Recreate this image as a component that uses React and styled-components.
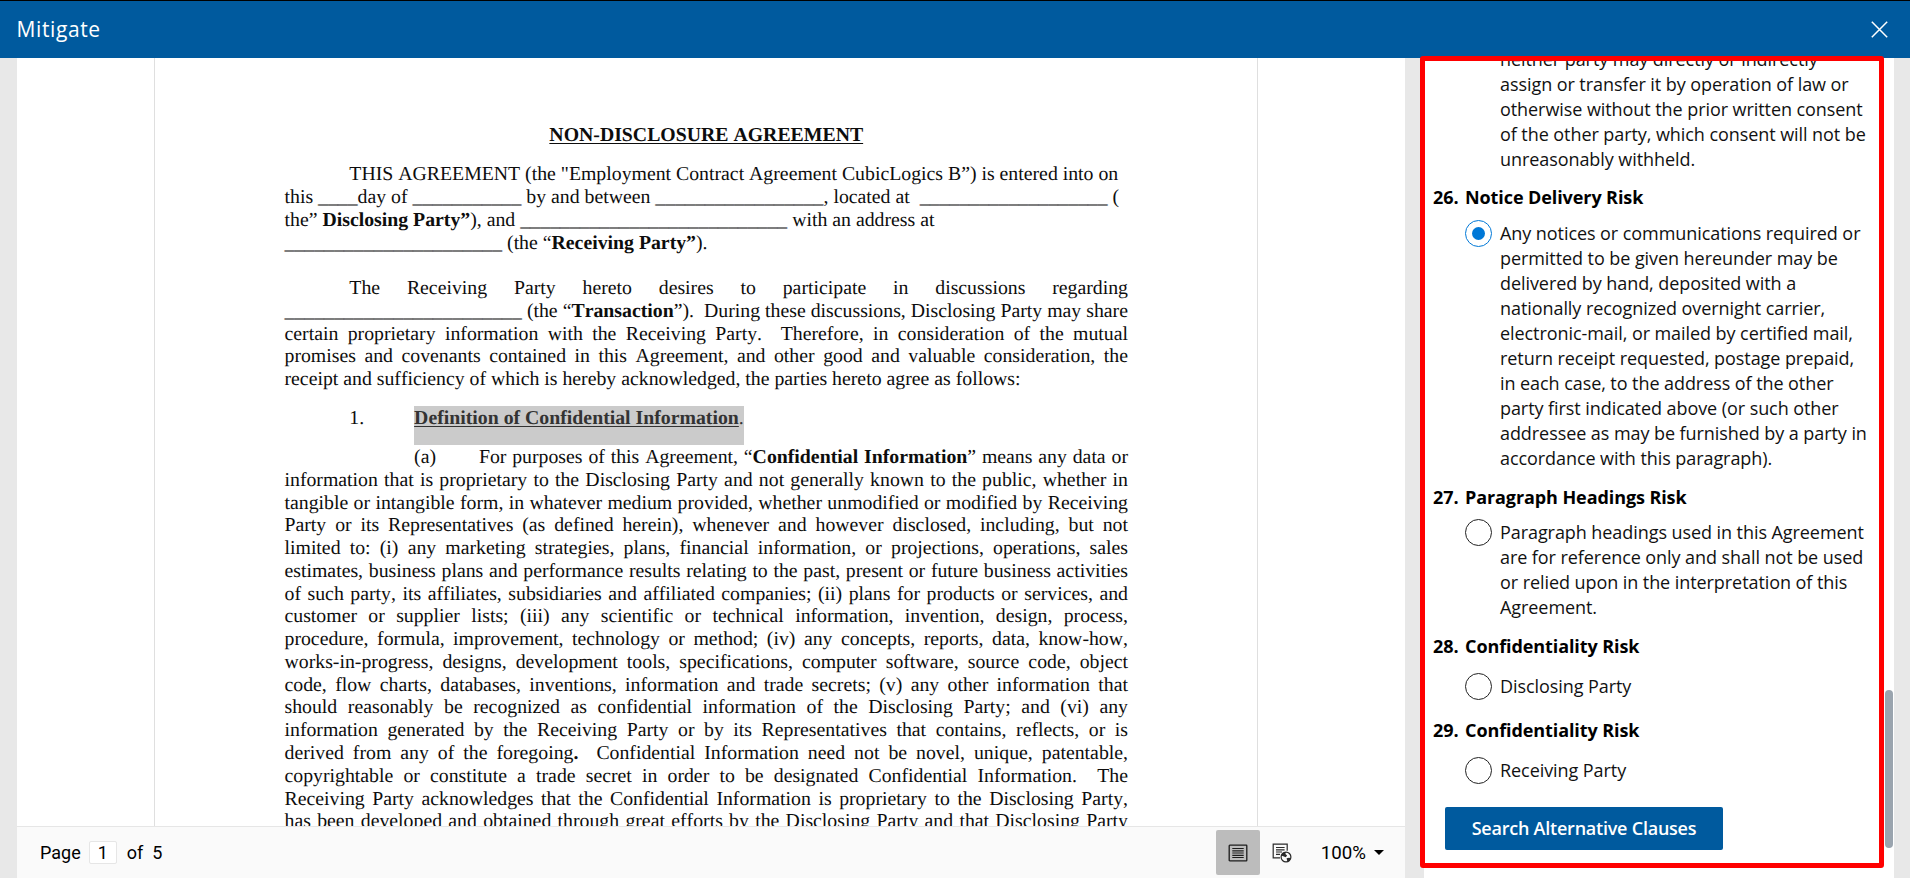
import React from "react";
import styled, { createGlobalStyle } from "styled-components";

const Global = createGlobalStyle`
  * { box-sizing: border-box; }
  body { margin: 0; background: #e8e8e8; overflow: hidden; }
`;

const UI = `"Open Sans", "Noto Sans", sans-serif`;

const Window = styled.div`
  position: relative;
  display: flex;
  flex-direction: column;
  width: 1910px;
  height: 878px;
  overflow: hidden;
  background: #e8e8e8;
  font-family: ${UI};
`;
const Header = styled.header`
  display: flex;
  align-items: center;
  justify-content: space-between;
  flex: none;
  height: 58px;
  padding: 0 22px 0 16.5px;
  border-top: 1px solid #000;
  background: #005a9e;
  color: #fff;
`;
const Title = styled.h1`
  margin: 0 0 2px;
  font-size: 21px;
  line-height: 28px;
  font-weight: 400;
  letter-spacing: 0.6px;
`;
const CloseButton = styled.button`
  display: flex;
  padding: 0;
  border: 0;
  background: none;
  color: #fff;
`;
const Body = styled.main`
  display: flex;
  flex: 1;
  min-height: 0;
  padding: 0 16px 0 17px;
  gap: 19px;
`;

const Viewer = styled.section`
  display: flex;
  flex-direction: column;
  width: 1388px;
  background: #fff;
`;
const Canvas = styled.div`
  flex: 1;
  min-height: 0;
  overflow: hidden;
  padding-left: 137px;
`;
const Sheet = styled.article`
  width: 1104px;
  height: 1400px;
  padding: 66px 129px 0 129.5px;
  border: solid #dfdfdf;
  border-width: 0 1px;
  color: #0d0d0d;
  font-family: "Liberation Serif", "Times New Roman", serif;
  font-size: 19.8px;
  line-height: 22.77px;
  font-kerning: none;
  text-rendering: geometricPrecision;
`;
const DocTitle = styled.h2`
  margin: 0 0 16.5px;
  font-size: inherit;
  font-weight: 700;
  text-align: center;
  text-decoration: underline;
  text-underline-offset: 2px;
`;
const Paragraph = styled.div`
  margin-bottom: ${(p) => p.$gap ?? 16.2}px;
`;
const Line = styled.div`
  padding-left: ${(p) => p.$indent ?? 0}px;
  white-space: ${(p) => (p.$justify ? "normal" : "pre")};
  text-align-last: ${(p) => (p.$justify ? "justify" : "left")};
  word-spacing: ${(p) => (p.$justify ? "-0.6px" : "normal")};
`;
const Clause = styled.div`
  display: flex;
  padding-left: 64.8px;
  margin-bottom: 16.2px;
`;
const ClauseNo = styled.span`
  width: 64.8px;
`;
const Selected = styled.span`
  height: 39px;
  margin: -1.5px 0 -14.75px;
  padding-top: 1.5px;
  background: #cbcbcb;
  color: #333;
  white-space: pre;
  b { text-decoration: underline; text-underline-offset: 2px; }
`;
const SubNo = styled.span`
  display: inline-block;
  width: 64.8px;
  text-align-last: left;
`;

const StatusBar = styled.footer`
  display: flex;
  align-items: center;
  flex: none;
  height: 52px;
  padding: 0 21px 0 23px;
  border-top: 1px solid #e6e6e6;
  background: #fafafa;
  color: #000;
  font-family: Roboto, sans-serif;
  font-size: 18px;
`;
const PageBox = styled.span`
  width: 28px;
  height: 23px;
  margin: 0 10px 0 8px;
  border: 1px solid #e6e6e6;
  border-radius: 2px;
  background: #fff;
  line-height: 21px;
  text-align: center;
`;
const Total = styled.span`
  margin-left: 9px;
`;
const ViewButton = styled.button`
  display: flex;
  align-items: center;
  justify-content: center;
  width: 44px;
  height: 45px;
  margin-left: ${(p) => (p.$first ? "auto" : "0")};
  padding: 0;
  border: 0;
  border-radius: 2px;
  background: ${(p) => (p.$active ? "#bcbcbc" : "transparent")};
`;
const Zoom = styled.div`
  display: flex;
  align-items: center;
  gap: 8px;
  margin-left: 17px;
  font-size: 18.7px;
`;
const Caret = styled.span`
  border: solid transparent;
  border-width: 5.5px 5px 0;
  border-top-color: #000;
`;

const SidePanel = styled.aside`
  display: flex;
  width: 470px;
  background: #fff;
  overflow: hidden;
`;
const RiskList = styled.div`
  flex: 1;
  margin-top: -12px;
  padding-left: 9px;
  font-size: 18px;
  line-height: 25px;
  letter-spacing: -0.07px;
  color: #111;
`;
const Risk = styled.section`
  margin-bottom: ${(p) => p.$after}px;
`;
const RiskTitle = styled.h3`
  display: flex;
  margin: 0 0 ${(p) => p.$gap}px;
  font-size: 18px;
  line-height: 25px;
  font-weight: 700;
  letter-spacing: -0.09px;
  color: #000;
`;
const RiskNo = styled.span`
  width: 32px;
`;
const Option = styled.label`
  display: flex;
  gap: 8px;
  padding-left: 32px;
  min-height: 27px;
`;
const Radio = styled.span`
  display: flex;
  align-items: center;
  justify-content: center;
  flex: none;
  width: 27px;
  height: 27px;
  border: 1px solid ${(p) => (p.$on ? "#0078d7" : "#222")};
  border-radius: 50%;
  visibility: ${(p) => (p.$hidden ? "hidden" : "visible")};
  &::after {
    content: "";
    width: 13px;
    height: 13px;
    border-radius: 50%;
    background: ${(p) => (p.$on ? "#0078d7" : "transparent")};
  }
`;
const OptionText = styled.span`
  white-space: pre;
  padding-top: 1px;
`;
const SearchButton = styled.button`
  display: block;
  width: 278px;
  height: 43px;
  margin-left: 12px;
  padding: 0 0 2px;
  border: 0;
  border-radius: 2px;
  background: #005a9e;
  color: #fff;
  font-family: ${UI};
  font-size: 18px;
  font-weight: 600;
  letter-spacing: -0.23px;
`;
const Rail = styled.div`
  width: 9px;
  padding: 632px 1px 0 0;
`;
const Thumb = styled.div`
  height: 158px;
  border-radius: 4px;
  background: #9aa4ae;
`;
const Highlight = styled.div`
  position: absolute;
  left: 1420px;
  top: 56px;
  width: 464px;
  height: 812px;
  border: 5px solid #f00;
  border-radius: 3px;
  pointer-events: none;
`;

const u = (n) => "_".repeat(n);

const DEFINITION = [
  "information that is proprietary to the Disclosing Party and not generally known to the public, whether in",
  "tangible or intangible form, in whatever medium provided, whether unmodified or modified by Receiving",
  "Party or its Representatives (as defined herein), whenever and however disclosed, including, but not",
  "limited to: (i) any marketing strategies, plans, financial information, or projections, operations, sales",
  "estimates, business plans and performance results relating to the past, present or future business activities",
  "of such party, its affiliates, subsidiaries and affiliated companies; (ii) plans for products or services, and",
  "customer or supplier lists; (iii) any scientific or technical information, invention, design, process,",
  "procedure, formula, improvement, technology or method; (iv) any concepts, reports, data, know-how,",
  "works-in-progress, designs, development tools, specifications, computer software, source code, object",
  "code, flow charts, databases, inventions, information and trade secrets; (v) any other information that",
  "should reasonably be recognized as confidential information of the Disclosing Party; and (vi) any",
  "information generated by the Receiving Party or by its Representatives that contains, reflects, or is",
  <>derived from any of the foregoing<b>.</b>&nbsp; Confidential Information need not be novel, unique, patentable,</>,
  <>copyrightable or constitute a trade secret in order to be designated Confidential Information.&nbsp; The</>,
  "Receiving Party acknowledges that the Confidential Information is proprietary to the Disclosing Party,",
  "has been developed and obtained through great efforts by the Disclosing Party and that Disclosing Party",
];

const RISKS = [
  {
    after: 13,
    lines: [
      "neither party may directly or indirectly",
      "assign or transfer it by operation of law or",
      "otherwise without the prior written consent",
      "of the other party, which consent will not be",
      "unreasonably withheld.",
    ],
  },
  {
    no: 26, title: "Notice Delivery Risk", on: true, gap: 10, after: 14,
    lines: [
      "Any notices or communications required or",
      "permitted to be given hereunder may be",
      "delivered by hand, deposited with a",
      "nationally recognized overnight carrier,",
      "electronic-mail, or mailed by certified mail,",
      "return receipt requested, postage prepaid,",
      "in each case, to the address of the other",
      "party first indicated above (or such other",
      "addressee as may be furnished by a party in",
      "accordance with this paragraph).",
    ],
  },
  {
    no: 27, title: "Paragraph Headings Risk", gap: 9, after: 14,
    lines: [
      "Paragraph headings used in this Agreement",
      "are for reference only and shall not be used",
      "or relied upon in the interpretation of this",
      "Agreement.",
    ],
  },
  { no: 28, title: "Confidentiality Risk", gap: 14, after: 18, lines: ["Disclosing Party"] },
  { no: 29, title: "Confidentiality Risk", gap: 14, after: 23, lines: ["Receiving Party"] },
];

const CloseIcon = () => (
  <svg width="17" height="17" viewBox="0 0 17 17" fill="none" stroke="currentColor" strokeWidth="1.5">
    <path d="M.8 .8 16.2 16.2M16.2 .8 .8 16.2" />
  </svg>
);
const PrintLayoutIcon = () => (
  <svg width="20" height="18" viewBox="0 0 20 18" fill="none" stroke="#1c1c1c">
    <rect x="1.2" y="1.2" width="17.6" height="15.6" rx=".6" strokeWidth="1.3" />
    <path d="M4.3 4.5h11.4M4.3 6.8h11.4M4.3 9h11.4M4.3 11.3h11.4M4.3 13.5h11.4" strokeWidth="1.15" />
  </svg>
);
const WebLayoutIcon = () => (
  <svg width="20" height="20" viewBox="0 0 20 20" fill="none" stroke="#2a2a2a" strokeWidth="1.2">
    <path d="M8 14.9H1.2V1.2h14V7.8" />
    <path d="M4 4.5h8.6M4 6.8h8.6M4 9h6M4 11.3h4" />
    <circle cx="14" cy="14" r="4.9" fill="#fafafa" />
    <path
      d="M9.300 12.600c.7-2 2.600-3.400 4.600-3.500l-.5 2 1.700 1.500-1.300 1.600-1.900-.6zM14.600 15.300l2.500-.6 1.600.5c-.4 1.700-1.600 3-3.300 3.500z"
      fill="#2a2a2a"
      stroke="none"
    />
  </svg>
);

export default function App() {
  return (
    <Window>
      <Global />
      <Header>
        <Title>Mitigate</Title>
        <CloseButton aria-label="Close"><CloseIcon /></CloseButton>
      </Header>
      <Body>
        <Viewer>
          <Canvas>
            <Sheet>
              <DocTitle>NON-DISCLOSURE AGREEMENT</DocTitle>
              <Paragraph $gap={22.77}>
                <Line $indent={64.8}>THIS AGREEMENT (the "Employment Contract Agreement CubicLogics B”) is entered into on</Line>
                <Line>this {u(4)}day of {u(11)} by and between {u(17)}, located at  {u(19)} (</Line>
                <Line>the” <b>Disclosing Party”</b>), and {u(27)} with an address at</Line>
                <Line>{u(22)} (the “<b>Receiving Party”</b>).</Line>
              </Paragraph>
              <Paragraph>
                <Line $justify $indent={64.8}>The Receiving Party hereto desires to participate in discussions regarding</Line>
                <Line $justify>{u(24)} (the “<b>Transaction</b>”).&nbsp; During these discussions, Disclosing Party may share</Line>
                <Line $justify>certain proprietary information with the Receiving Party.&nbsp; Therefore, in consideration of the mutual</Line>
                <Line $justify>promises and covenants contained in this Agreement, and other good and valuable consideration, the</Line>
                <Line>receipt and sufficiency of which is hereby acknowledged, the parties hereto agree as follows:</Line>
              </Paragraph>
              <Clause>
                <ClauseNo>1.</ClauseNo>
                <Selected><b>Definition of Confidential Information</b>.</Selected>
              </Clause>
              <Paragraph>
                <Line $justify $indent={129.6}>
                  <SubNo>(a)</SubNo>For purposes of this Agreement, “<b>Confidential Information</b>” means any data or
                </Line>
                {DEFINITION.map((t, i) => <Line key={i} $justify>{t}</Line>)}
              </Paragraph>
            </Sheet>
          </Canvas>
          <StatusBar>
            <span>Page</span>
            <PageBox>1</PageBox>
            <span>of</span>
            <Total>5</Total>
            <ViewButton $first $active aria-label="Print layout"><PrintLayoutIcon /></ViewButton>
            <ViewButton aria-label="Web layout"><WebLayoutIcon /></ViewButton>
            <Zoom>100%<Caret /></Zoom>
          </StatusBar>
        </Viewer>
        <SidePanel>
          <RiskList>
            {RISKS.map((r, i) => (
              <Risk key={i} $after={r.after}>
                {r.title && <RiskTitle $gap={r.gap}><RiskNo>{r.no}.</RiskNo>{r.title}</RiskTitle>}
                <Option>
                  <Radio $on={r.on} $hidden={!r.title} />
                  <OptionText>{r.lines.join("\n")}</OptionText>
                </Option>
              </Risk>
            ))}
            <SearchButton>Search Alternative Clauses</SearchButton>
          </RiskList>
          <Rail><Thumb /></Rail>
        </SidePanel>
      </Body>
      <Highlight />
    </Window>
  );
}
